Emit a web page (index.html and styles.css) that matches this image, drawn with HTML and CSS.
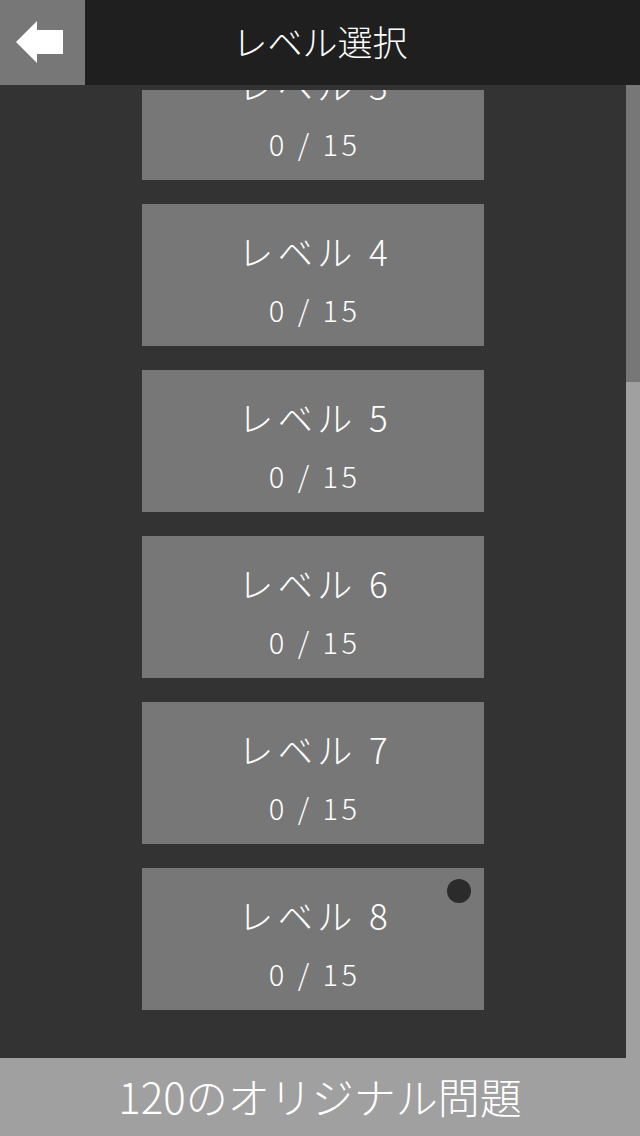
FILE: index.html
```html
<!DOCTYPE html>
<html lang="ja">
<head>
<meta charset="utf-8">
<title>レベル選択</title>
<link rel="stylesheet" href="styles.css">
</head>
<body>
<div class="app">
  <header class="topbar">
    <div class="back">
      <svg width="85" height="85" viewBox="0 0 85 85"><path d="M16 42 L37 21 L37 30 L63 30 L63 54 L37 54 L37 63 Z" fill="#ffffff"/></svg>
    </div>
    <div class="title">レベル選択</div>
    <div class="spacer"></div>
  </header>
  <main class="content">
    <div class="list-area">
      <div class="viewport">
        <div class="list">
          <div class="card"><div class="name">レベル 3</div><div class="score">0 / 15</div></div>
          <div class="card"><div class="name">レベル 4</div><div class="score">0 / 15</div></div>
          <div class="card"><div class="name">レベル 5</div><div class="score">0 / 15</div></div>
          <div class="card"><div class="name">レベル 6</div><div class="score">0 / 15</div></div>
          <div class="card"><div class="name">レベル 7</div><div class="score">0 / 15</div></div>
          <div class="card"><div class="name">レベル 8</div><div class="score">0 / 15</div><span class="dot"></span></div>
        </div>
      </div>
    </div>
    <div class="scrollbar"><div class="thumb"></div></div>
  </main>
  <footer class="bottombar">120のオリジナル問題</footer>
</div>
</body>
</html>
```
FILE: styles.css
```css
html, body {
  margin: 0;
  padding: 0;
  background: #333333;
}
body {
  font-family: "Noto Sans CJK JP", "Noto Sans", sans-serif;
  font-weight: 300;
  color: #ffffff;
}
.app {
  width: 640px;
  height: 1136px;
  display: flex;
  flex-direction: column;
  overflow: hidden;
}
.topbar {
  height: 85px;
  flex: 0 0 85px;
  background: #1f1f1f;
  display: grid;
  grid-template-columns: 85px 1fr 85px;
  align-items: center;
}
.back {
  width: 85px;
  height: 85px;
  background: #777777;
}
.back svg { display: block; }
.title {
  text-align: center;
  font-size: 35px;
  line-height: 82px;
  height: 85px;
}
.content {
  flex: 1 1 auto;
  display: flex;
  min-height: 0;
}
.list-area {
  flex: 1 1 auto;
  padding-top: 5px;
  display: flex;
  flex-direction: column;
  min-height: 0;
}
.viewport {
  flex: 1 1 auto;
  overflow: hidden;
}
.list {
  margin-top: -52px;
  display: flex;
  flex-direction: column;
  align-items: center;
  gap: 24px;
}
.card {
  position: relative;
  width: 342px;
  height: 142px;
  box-sizing: border-box;
  padding-top: 22px;
  background: #777777;
  text-align: center;
}
.name {
  font-size: 35px;
  line-height: 50px;
  height: 50px;
  letter-spacing: 4.5px;
  padding-left: 4.5px;
}
.score {
  margin-top: 13px;
  font-size: 29px;
  line-height: 40px;
  height: 40px;
  letter-spacing: 3.5px;
  padding-left: 3.5px;
}
.dot {
  position: absolute;
  left: 305px;
  top: 11px;
  width: 24px;
  height: 24px;
  border-radius: 50%;
  background: #2b2b2b;
}
.scrollbar {
  flex: 0 0 14px;
  width: 14px;
  background: #a0a0a0;
  display: flex;
  flex-direction: column;
}
.thumb {
  height: 297px;
  background: #777777;
}
.bottombar {
  flex: 0 0 78px;
  height: 78px;
  background: #a0a0a0;
  text-align: center;
  font-size: 42px;
  line-height: 76px;
}
```
